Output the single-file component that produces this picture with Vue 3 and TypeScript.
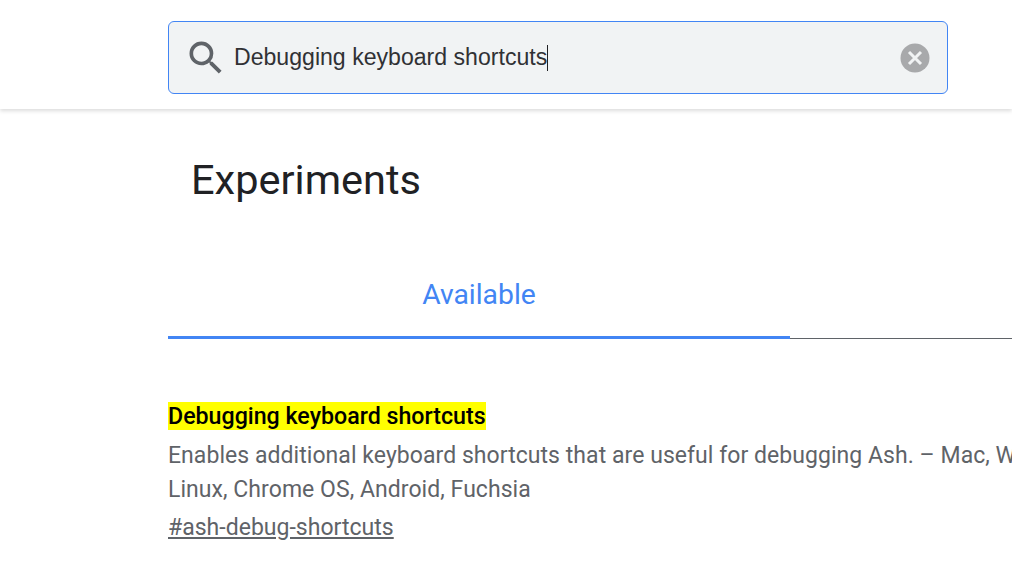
<script setup lang="ts">
const query = 'Debugging keyboard shortcuts'
const experiment = {
  title: 'Debugging keyboard shortcuts',
  description: 'Enables additional keyboard shortcuts that are useful for debugging Ash. – Mac, Windows, Linux, Chrome OS, Android, Fuchsia',
  link: '#ash-debug-shortcuts'
}
</script>

<template>
  <div class="page">
    <header class="header">
      <div class="search-box">
        <svg class="search-icon" viewBox="0 0 24 24" width="44" height="44">
          <path fill="#5f6368" d="M15.5 14h-.79l-.28-.27A6.47 6.47 0 0 0 16 9.5 6.5 6.5 0 1 0 9.5 16c1.61 0 3.09-.59 4.23-1.57l.27.28v.79l5 4.99L20.49 19l-4.99-5zm-6 0C7.01 14 5 11.99 5 9.5S7.01 5 9.5 5 14 7.01 14 9.5 11.99 14 9.5 14z" />
        </svg>
        <span class="query">{{ query }}<i class="caret"></i></span>
        <svg class="clear-icon" viewBox="0 0 30 30" width="30" height="30">
          <circle cx="15" cy="15" r="14.5" fill="#a8a9ab" />
          <path d="M9 9l12 12M21 9L9 21" stroke="#f1f3f4" stroke-width="3" fill="none" />
        </svg>
      </div>
    </header>

    <main class="content">
      <h1 class="title">Experiments</h1>
      <div class="tabs">
        <div class="tab">Available</div>
        <div class="tab-rest"></div>
      </div>
      <section class="experiment">
        <h2 class="name"><mark>{{ experiment.title }}</mark></h2>
        <p class="desc">{{ experiment.description }}</p>
        <a class="link">{{ experiment.link }}</a>
      </section>
    </main>
  </div>
</template>

<style>
html,
body {
  margin: 0;
  background: #fff;
  overflow: hidden;
}
</style>

<style scoped>
.page {
  width: 1012px;
  height: 570px;
  overflow: hidden;
  font-family: Roboto, sans-serif;
}

.header {
  height: 109px;
  box-sizing: border-box;
  padding: 21px 0 0 168px;
  box-shadow: 0 2px 4px rgba(0, 0, 0, .14);
}

.search-box {
  width: 780px;
  height: 73px;
  box-sizing: border-box;
  display: flex;
  align-items: center;
  padding: 0 17px 0 14.5px;
  background: #f1f3f4;
  border: 1px solid #4285f4;
  border-radius: 6px;
}

.search-icon {
  flex: none;
  margin-right: 6.5px;
}

.query {
  flex: 1;
  font-family: "Liberation Sans", Arial, sans-serif;
  font-size: 23.1px;
  color: #303134;
  display: flex;
  align-items: center;
}

.caret {
  width: 1px;
  height: 26px;
  background: #202124;
}

.clear-icon {
  flex: none;
}

.content {
  padding-left: 168px;
}

.title {
  margin: 0;
  padding: 47px 0 0 23px;
  font-size: 41.5px;
  line-height: 48px;
  font-weight: 400;
  color: #202124;
}

.tabs {
  display: flex;
  margin-top: 67px;
  width: 1000px;
}

.tab {
  width: 622px;
  height: 68px;
  box-sizing: border-box;
  padding-top: 6px;
  text-align: center;
  font-size: 28.3px;
  line-height: 36px;
  color: #4285f4;
  border-bottom: 3px solid #4285f4;
}

.tab-rest {
  flex: 1;
  height: 68px;
  box-sizing: border-box;
  border-bottom: 1px solid #5f6368;
}

.experiment {
  padding-top: 64px;
  width: 960px;
}

.name {
  margin: 0;
  font-size: 23.2px;
  line-height: 27px;
  font-weight: 500;
  color: #000;
}

.name mark {
  background: #ff0;
  color: #000;
}

.desc {
  margin: 9px 0 0;
  font-size: 23px;
  line-height: 34px;
  letter-spacing: .05px;
  color: #5f6368;
}

.link {
  display: inline-block;
  margin-top: 4px;
  font-size: 23.05px;
  line-height: 34px;
  color: #5f6368;
  text-decoration: underline;
}
</style>
